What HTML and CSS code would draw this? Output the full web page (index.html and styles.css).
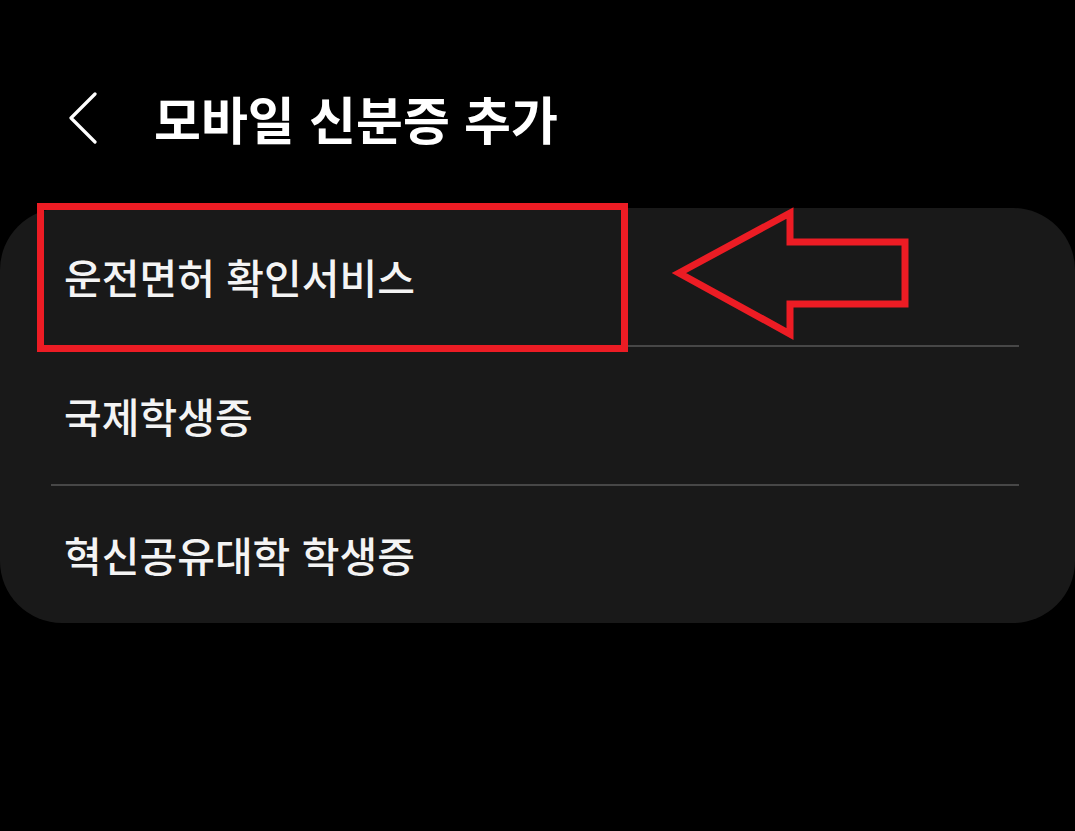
FILE: index.html
```html
<!DOCTYPE html>
<html lang="ko">
<head>
<meta charset="utf-8">
<title>모바일 신분증 추가</title>
<link rel="stylesheet" href="styles.css">
</head>
<body>
<div class="screen">
  <header class="appbar">
    <button class="back" aria-label="뒤로">
      <svg width="30" height="52" viewBox="0 0 30 52"><path d="M27 2 L3 26 L27 50" fill="none" stroke="#fff" stroke-width="3.2" stroke-linecap="round" stroke-linejoin="round"/></svg>
    </button>
    <h1 class="title">모바일 신분증 추가</h1>
  </header>
  <section class="card">
    <div class="row">운전면허 확인서비스</div>
    <div class="divider"></div>
    <div class="row">국제학생증</div>
    <div class="divider"></div>
    <div class="row">혁신공유대학 학생증</div>
  </section>
  <div class="highlight"></div>
  <svg class="arrow" width="250" height="140" viewBox="0 0 250 140">
    <polygon points="8,67 119,7 119,36 234,36 234,98 119,98 119,128" fill="none" stroke="#ec1c24" stroke-width="7" stroke-linejoin="miter"/>
  </svg>
</div>
</body>
</html>
```
FILE: styles.css
```css
html, body {
  margin: 0;
  padding: 0;
  background: #000;
}
body {
  width: 1075px;
  height: 831px;
  overflow: hidden;
  font-family: "Noto Sans CJK KR", "Noto Sans", sans-serif;
  color: #fff;
}
.screen {
  position: relative;
  box-sizing: border-box;
  width: 1075px;
  height: 831px;
  padding-top: 60px;
}
.appbar {
  display: flex;
  align-items: center;
  height: 116px;
  padding-left: 68px;
}
.back {
  background: none;
  border: 0;
  padding: 0;
  width: 30px;
  height: 52px;
  display: flex;
}
.title {
  margin: 0 0 0 56px;
  font-size: 51px;
  font-weight: 700;
  line-height: 1;
}
.card {
  margin-top: 32px;
  background: #191919;
  border-radius: 62px;
  padding: 0 56px 0 51px;
}
.row {
  height: 137px;
  display: flex;
  align-items: center;
  padding-left: 13px;
  font-size: 41px;
  font-weight: 500;
  line-height: 1;
  color: #f4f4f4;
}
.divider {
  height: 2px;
  background: #474747;
}
.highlight {
  position: absolute;
  left: 37px;
  top: 203px;
  width: 577px;
  height: 135px;
  border: 7px solid #ec1c24;
}
.arrow {
  position: absolute;
  left: 671px;
  top: 206px;
}
```
